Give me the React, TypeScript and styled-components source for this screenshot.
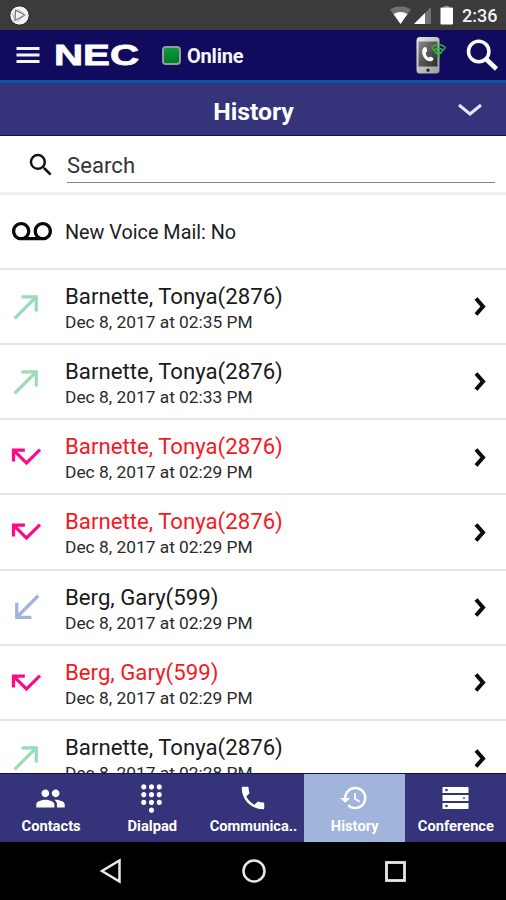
import React from "react";
import styled, { createGlobalStyle } from "styled-components";
import {
  MdCallMade,
  MdCallMissed,
  MdCallReceived,
  MdDialpad,
  MdHistory,
  MdPeople,
  MdPhone,
  MdSearch,
  MdStorage,
  MdVoicemail,
} from "react-icons/md";

const GlobalStyle = createGlobalStyle`
  * { box-sizing: border-box; }
  body { margin: 0; background: #000; font-family: Roboto, sans-serif; }
  svg { display: block; flex: none; }
`;

const Screen = styled.div`
  width: 506px;
  height: 900px;
  display: flex;
  flex-direction: column;
  overflow: hidden;
  background: #fff;
`;

const StatusBar = styled.div`
  height: 30px;
  flex: none;
  display: flex;
  align-items: center;
  justify-content: space-between;
  padding: 0 9px 0 9px;
  background: #3b3b3b;
`;

const StatusIcons = styled.div`
  display: flex;
  align-items: center;
`;

const Clock = styled.span`
  margin-left: 8px;
  width: 35px;
  font-size: 18px;
  font-weight: 500;
  line-height: 30px;
  padding-top: 2px;
  color: #f2f2f2;
  white-space: nowrap;
`;

const AppBar = styled.header`
  height: 53px;
  flex: none;
  display: flex;
  align-items: center;
  padding: 0 7px 0 16px;
  background: #110b5e;
  border-bottom: 3px solid #0d55a8;
`;

const Logo = styled.svg`
  margin-left: 14px;
  overflow: visible;
`;

const Presence = styled.span`
  width: 19px;
  height: 19px;
  margin-left: 22px;
  border: 2px solid #969a9c;
  border-radius: 4px;
  background: linear-gradient(#0b9a3c, #027a2a);
`;

const PresenceLabel = styled.span`
  margin-left: 6px;
  padding-top: 2px;
  font-size: 20px;
  font-weight: 700;
  letter-spacing: -0.2px;
  color: #f5f5fb;
`;

const BarActions = styled.div`
  display: flex;
  align-items: center;
  gap: 19px;
  margin-left: auto;
`;

const TitleBar = styled.div`
  height: 53px;
  flex: none;
  display: grid;
  grid-template-columns: 1fr auto 1fr;
  align-items: center;
  padding: 0 23px;
  background: #353379;
  border-bottom: 1px solid #110b6a;
`;

const Title = styled.h1`
  grid-column: 2;
  margin: 0;
  padding: 5px 0 0 1px;
  font-size: 24.8px;
  font-weight: 700;
  line-height: 30px;
  color: #fff;
`;

const TitleToggle = styled.div`
  justify-self: end;
  padding-top: 2px;
`;

const SearchBar = styled.div`
  height: 59px;
  flex: none;
  display: flex;
  padding: 14px 11px 0 26px;
  border-bottom: 3px solid #efefef;
`;

const SearchField = styled.div`
  flex: 1;
  height: 33px;
  margin-left: 11px;
  padding-top: 2px;
  font-size: 22px;
  line-height: 28px;
  letter-spacing: 0.1px;
  color: #333;
  border-bottom: 1px solid #858585;
`;

const List = styled.main`
  flex: 1;
  min-height: 0;
  overflow: hidden;
`;

const Row = styled.div<{ $height: number }>`
  height: ${(p) => p.$height}px;
  display: flex;
  align-items: center;
  padding-right: 20px;
  border-bottom: 2px solid #e6e6e6;
`;

const RowIcon = styled.div<{ $color: string }>`
  width: 65px;
  flex: none;
  padding-left: 7px;
  color: ${(p) => p.$color};
`;

const VoiceMailLabel = styled.span`
  padding-top: 3px;
  font-size: 19.8px;
  color: #1c1c1c;
`;

const CallInfo = styled.div`
  flex: 1;
  white-space: nowrap;
  padding-top: 4px;
`;

const Name = styled.div<{ $missed: boolean }>`
  font-size: 22.2px;
  line-height: 27px;
  color: ${(p) => (p.$missed ? "#f5191f" : "#1a1a1a")};
`;

const CallDate = styled.div`
  font-size: 17.35px;
  line-height: 24px;
  color: #2a2a2a;
`;

const TabBar = styled.nav`
  height: 69px;
  flex: none;
  display: grid;
  grid-template-columns: repeat(5, 1fr);
  background: #353379;
  border-top: 1px solid #110b6a;
`;

const Tab = styled.div<{ $active: boolean }>`
  display: flex;
  flex-direction: column;
  align-items: center;
  padding-top: 8px;
  background: ${(p) => (p.$active ? "#a1b4dc" : "transparent")};
  color: #fff;
`;

const TabIcon = styled.div`
  height: 32px;
  display: flex;
  align-items: center;
`;

const TabLabel = styled.span`
  margin-top: 2px;
  padding-left: 1px;
  font-size: 14.7px;
  font-weight: 700;
  line-height: 20px;
  white-space: nowrap;
`;

const SystemBar = styled.div`
  height: 58px;
  flex: none;
  display: flex;
  align-items: center;
  justify-content: space-between;
  padding: 0 99px 0 99px;
  background: #000;
`;

type Kind = "made" | "missed" | "received";

const kinds: Record<Kind, { color: string; Icon: React.ComponentType<{ size?: number }> }> = {
  made: { color: "#9bdcb8", Icon: MdCallMade },
  missed: { color: "#ff0a86", Icon: MdCallMissed },
  received: { color: "#a0b3de", Icon: MdCallReceived },
};

const calls: { kind: Kind; name: string; date: string }[] = [
  { kind: "made", name: "Barnette, Tonya(2876)", date: "Dec 8, 2017 at 02:35 PM" },
  { kind: "made", name: "Barnette, Tonya(2876)", date: "Dec 8, 2017 at 02:33 PM" },
  { kind: "missed", name: "Barnette, Tonya(2876)", date: "Dec 8, 2017 at 02:29 PM" },
  { kind: "missed", name: "Barnette, Tonya(2876)", date: "Dec 8, 2017 at 02:29 PM" },
  { kind: "received", name: "Berg, Gary(599)", date: "Dec 8, 2017 at 02:29 PM" },
  { kind: "missed", name: "Berg, Gary(599)", date: "Dec 8, 2017 at 02:29 PM" },
  { kind: "made", name: "Barnette, Tonya(2876)", date: "Dec 8, 2017 at 02:28 PM" },
];

const ConferenceIcon = () => (
  <svg width="27" height="24" viewBox="0 0 27 24">
    <path d="M0.500 1 h26 v6 h-26 Z M0.500 9 h26 v6 h-26 Z M0.500 17 h26 v6 h-26 Z" fill="#fff" />
    <circle cx="4.500" cy="4" r="1.300" fill="#353379" />
    <circle cx="22" cy="12" r="1.300" fill="#8d8cb8" />
    <circle cx="4.500" cy="20" r="1.300" fill="#353379" />
  </svg>
);

const tabs = [
  { label: "Contacts", icon: <MdPeople size={31} /> },
  { label: "Dialpad", icon: <MdDialpad size={31} /> },
  { label: "Communica..", icon: <MdPhone size={30} /> },
  { label: "History", icon: <MdHistory size={30} /> },
  { label: "Conference", icon: <ConferenceIcon /> },
];

const AppBadge = () => (
  <svg width="21" height="21" viewBox="0 0 21 21">
    <circle cx="10.5" cy="10.5" r="9.6" fill="#f3f3f3" stroke="#222" strokeWidth="0.8" />
    <path d="M6.5 5.2 L16 10 L6 15.5 Z" fill="none" stroke="#777" strokeWidth="1.3" strokeLinejoin="round" />
    <path d="M3 8 L6 15.5 M9 4 L16 10 M8 17 L16 10" stroke="#aaa" strokeWidth="0.8" />
  </svg>
);

const SignalIcons = () => (
  <svg width="64" height="20" viewBox="0 0 64 20">
    <path d="M0 4.5 Q10.500 -2 21 4.500 L10.500 19 Z" fill="#727272" />
    <path d="M3.500 9 Q10.500 5 17.500 9 L10.500 19 Z" fill="#fff" />
    <path d="M41 2 V19 H24 Z" fill="#727272" />
    <path d="M35 8 V19 H24 Z" fill="#fff" />
    <path d="M54 0.800 h5 v2 h-5 Z" fill="#8a8a8a" />
    <rect x="50.500" y="2.500" width="12.500" height="17" rx="1" fill="#fff" />
  </svg>
);

const MenuIcon = () => (
  <svg width="25" height="18" viewBox="0 0 25 18">
    <path d="M0.500 2.500 H23.500 M0.500 9 H23.500 M0.500 15.500 H23.500" stroke="#f4f4fb" strokeWidth="2.800" />
  </svg>
);

const PhoneStatusIcon = () => (
  <svg width="32" height="40" viewBox="0 0 32 40">
    <defs>
      <linearGradient id="shell" x1="0" x2="1" y1="0" y2="1">
        <stop offset="0" stopColor="#e8e8e8" />
        <stop offset="1" stopColor="#9b9b9b" />
      </linearGradient>
      <linearGradient id="glass" x1="0" x2="1" y1="0" y2="1">
        <stop offset="0" stopColor="#8a8a8a" />
        <stop offset="0.5" stopColor="#555" />
        <stop offset="1" stopColor="#2d2d2d" />
      </linearGradient>
    </defs>
    <rect x="1.500" y="2" width="23" height="36.500" rx="3.500" fill="url(#shell)" />
    <rect x="3.500" y="6.500" width="19" height="25" fill="url(#glass)" />
    <circle cx="13" cy="35.200" r="1.600" fill="#222" />
    <path
      d="M9 12.500 q2-1.200 2.700 1 l.4 2.500 q-.2 1-1.600 1.700 q.5 3.500 3.300 5 q1.200-1.300 2.200-.9 l2.200 1.300 q.9 1-.9 2.600 q-3.300 1.800-7-1.400 q-4.500-5.400-2.600-10.300 q.4-1 1.300-1.500z"
      fill="#fff"
    />
    <g fill="none" stroke="#35b53c" strokeWidth="1.500">
      <path d="M16.500 12.500 Q23.500 6.500 30.500 12.500" />
      <path d="M18.500 15.500 Q23.500 11 28.500 15.500" />
      <path d="M20.500 18.500 Q23.500 16 26.500 18.500" />
      <path d="M16.500 12.500 L23.500 20 L30.500 12.500" strokeWidth="1.300" />
      <path d="M23.500 17 V23" strokeWidth="2.200" />
    </g>
  </svg>
);

const BarSearchIcon = () => (
  <svg width="33" height="33" viewBox="0 0 33 33">
    <circle cx="12.700" cy="12.500" r="10.200" fill="none" stroke="#fff" strokeWidth="3.500" />
    <path d="M20 20 L30.500 30" stroke="#fff" strokeWidth="4.500" />
  </svg>
);

const ChevronRight = () => (
  <svg width="12" height="20" viewBox="0 0 12 20">
    <path d="M2 2.500 L9 10.500 L2 18.500" fill="none" stroke="#0a0a0a" strokeWidth="4" />
  </svg>
);

export default function App() {
  return (
    <Screen>
      <GlobalStyle />
      <StatusBar>
        <AppBadge />
        <StatusIcons>
          <SignalIcons />
          <Clock>2:36</Clock>
        </StatusIcons>
      </StatusBar>

      <AppBar>
        <MenuIcon />
        <Logo width="85" height="24" viewBox="0 0 85 24">
          <text
            x="-1"
            y="22"
            fill="#fff"
            stroke="#fff"
            strokeWidth="0.8"
            fontFamily="Liberation Sans, sans-serif"
            fontWeight="700"
            fontSize="30"
            textLength="85"
            lengthAdjust="spacingAndGlyphs"
          >
            NEC
          </text>
        </Logo>
        <Presence />
        <PresenceLabel>Online</PresenceLabel>
        <BarActions>
          <PhoneStatusIcon />
          <BarSearchIcon />
        </BarActions>
      </AppBar>

      <TitleBar>
        <Title>History</Title>
        <TitleToggle>
          <svg width="26" height="14" viewBox="0 0 26 14">
            <path d="M2 2 L13 11 L24 2" fill="none" stroke="#e6e6f5" strokeWidth="3" />
          </svg>
        </TitleToggle>
      </TitleBar>

      <SearchBar>
        <MdSearch size={30} color="#111" />
        <SearchField>Search</SearchField>
      </SearchBar>

      <List>
        <Row $height={74.5}>
          <RowIcon $color="#0a0a0a">
            <svg width="50" height="40" viewBox="0 0 50 40">
              <MdVoicemail x={5} y={1} size={40} />
            </svg>
          </RowIcon>
          <VoiceMailLabel>New Voice Mail: No</VoiceMailLabel>
        </Row>
        {calls.map((call, i) => {
          const { Icon, color } = kinds[call.kind];
          return (
            <Row key={i} $height={75.25}>
              <RowIcon $color={color}>
                <Icon size={39} />
              </RowIcon>
              <CallInfo>
                <Name $missed={call.kind === "missed"}>{call.name}</Name>
                <CallDate>{call.date}</CallDate>
              </CallInfo>
              <ChevronRight />
            </Row>
          );
        })}
      </List>

      <TabBar>
        {tabs.map((tab) => (
          <Tab key={tab.label} $active={tab.label === "History"}>
            <TabIcon>{tab.icon}</TabIcon>
            <TabLabel>{tab.label}</TabLabel>
          </Tab>
        ))}
      </TabBar>

      <SystemBar>
        <svg width="24" height="26" viewBox="0 0 24 26">
          <path d="M20.500 2.500 V23.500 L3 13 Z" fill="none" stroke="#e8e8e8" strokeWidth="2.500" />
        </svg>
        <svg width="26" height="26" viewBox="0 0 26 26">
          <circle cx="13" cy="13" r="10.500" fill="none" stroke="#e8e8e8" strokeWidth="2.500" />
        </svg>
        <svg width="23" height="23" viewBox="0 0 23 23">
          <rect x="2.500" y="2.500" width="18" height="18" fill="none" stroke="#e8e8e8" strokeWidth="2.800" />
        </svg>
      </SystemBar>
    </Screen>
  );
}
